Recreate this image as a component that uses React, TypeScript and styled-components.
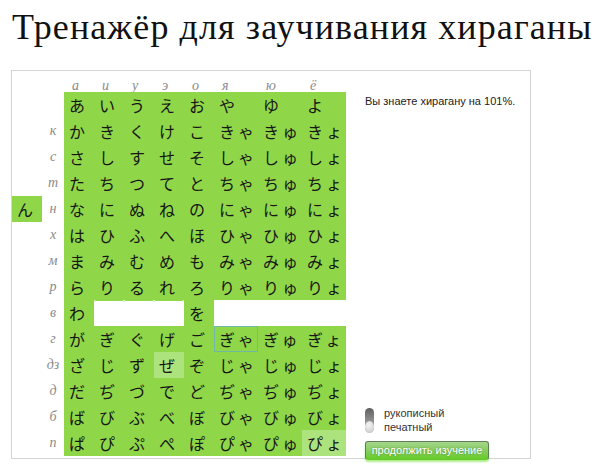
import React from "react";
import styled, { createGlobalStyle, css } from "styled-components";

const Global = createGlobalStyle`
  html, body { margin: 0; padding: 0; background: #fff; }
  body { width: 604px; height: 472px; overflow: hidden; }
`;

const Page = styled.div`
  width: 604px;
  height: 472px;
  overflow: hidden;
`;

const Title = styled.h1`
  margin: 7px 0 23px 12px;
  font-family: "Liberation Serif", "Times New Roman", serif;
  font-weight: normal;
  font-size: 36px;
  letter-spacing: 1.1px;
  line-height: 40px;
  color: #111;
  white-space: nowrap;
`;

const Box = styled.div`
  margin-left: 11px;
  width: 518px;
  height: 386px;
  border: 1px solid #d4d4d4;
  display: flex;
  padding-top: 1px;
`;

const Table = styled.div`
  display: grid;
  grid-template-columns: 30px 22px repeat(5, 30px) repeat(3, 44px);
  grid-template-rows: 20px repeat(14, 26px);
  flex: none;
`;

const Header = styled.div`
  font-family: "Liberation Serif", "Times New Roman", serif;
  font-style: italic;
  font-size: 14px;
  color: #8a8a8a;
  padding-left: 8px;
  display: flex;
  align-items: flex-end;
  margin-bottom: -2px;
`;

const RowLabel = styled.div`
  font-family: "Liberation Serif", "Times New Roman", serif;
  font-style: italic;
  font-size: 14px;
  color: #8a8a8a;
  display: flex;
  align-items: center;
  justify-content: center;
`;

const Empty = styled.div``;

type Variant = "normal" | "light" | "outlined" | "blank";

const Kana = styled.div<{ $variant?: Variant; $compound?: boolean }>`
  font-family: "Noto Sans CJK JP", "Noto Sans", sans-serif;
  font-size: 16px;
  color: #161616;
  background: #8fd748;
  display: flex;
  align-items: center;
  padding-left: 5px;
  letter-spacing: ${(p) => (p.$compound ? "3px" : "0")};
  white-space: nowrap;
  ${(p) =>
    p.$variant === "light" &&
    css`
      background: #ade37c;
    `}
  ${(p) =>
    p.$variant === "outlined" &&
    css`
      box-shadow: inset 0 0 0 1px #6fb9a4;
    `}
  ${(p) =>
    p.$variant === "blank" &&
    css`
      background: #fff;
      border-top: 1px solid #8fd748;
      border-radius: 2px;
    `}
`;

const NCell = styled(Kana)``;

const Side = styled.div`
  flex: 1;
  display: flex;
  flex-direction: column;
  justify-content: space-between;
  padding: 22px 0 0 19px;
  font-family: "Liberation Sans", Arial, sans-serif;
  font-size: 11px;
  color: #222;
`;

const Score = styled.div`
  line-height: 14px;
`;

const Bottom = styled.div`
  display: flex;
  flex-direction: column;
  gap: 7px;
  margin-bottom: -2px;
`;

const ToggleRow = styled.div`
  display: flex;
  align-items: center;
  gap: 10px;
`;

const Toggle = styled.div`
  position: relative;
  width: 9px;
  height: 25px;
  border-radius: 5px;
  background: linear-gradient(#5e5e5e, #8e8e8e 50%, #c8c8c8);
  &::after {
    content: "";
    position: absolute;
    left: 0;
    bottom: 0;
    width: 9px;
    height: 12px;
    border-radius: 50%;
    background: radial-gradient(circle at 40% 35%, #f4f4f4, #c4c4c4);
  }
`;

const Labels = styled.div`
  display: flex;
  flex-direction: column;
  line-height: 14px;
  color: #333;
`;

const Button = styled.div`
  width: 122px;
  height: 17px;
  border: 1px solid #5f7d56;
  border-bottom-color: #62c82c;
  border-radius: 3px;
  background: linear-gradient(#a4d68a, #86cc5e 55%, #66cc26);
  color: #fff;
  font-size: 11px;
  line-height: 17px;
  text-align: center;
  text-shadow: 0 0 2px rgba(60, 110, 30, 0.7);
  box-shadow: 0 2px 2px rgba(120, 220, 60, 0.6);
`;

const headers = ["а", "и", "у", "э", "о", "я", "ю", "ё"];
const labels = ["", "к", "с", "т", "н", "х", "м", "р", "в", "г", "дз", "д", "б", "п"];

type Cell = { t: string; v?: Variant } | null;

const rows: Cell[][] = [
  ["あ", "い", "う", "え", "お", "や", "ゆ", "よ"],
  ["か", "き", "く", "け", "こ", "きゃ", "きゅ", "きょ"],
  ["さ", "し", "す", "せ", "そ", "しゃ", "しゅ", "しょ"],
  ["た", "ち", "つ", "て", "と", "ちゃ", "ちゅ", "ちょ"],
  ["な", "に", "ぬ", "ね", "の", "にゃ", "にゅ", "にょ"],
  ["は", "ひ", "ふ", "へ", "ほ", "ひゃ", "ひゅ", "ひょ"],
  ["ま", "み", "む", "め", "も", "みゃ", "みゅ", "みょ"],
  ["ら", "り", "る", "れ", "ろ", "りゃ", "りゅ", "りょ"],
  ["わ", "#", "#", "#", "を", "", "", ""],
  ["が", "ぎ", "ぐ", "げ", "ご", "ぎゃ*", "ぎゅ", "ぎょ"],
  ["ざ", "じ", "ず", "ぜ+", "ぞ", "じゃ", "じゅ", "じょ"],
  ["だ", "ぢ", "づ", "で", "ど", "ぢゃ", "ぢゅ", "ぢょ"],
  ["ば", "び", "ぶ", "べ", "ぼ", "びゃ", "びゅ", "びょ"],
  ["ぱ", "ぴ", "ぷ", "ぺ", "ぽ", "ぴゃ", "ぴゅ", "ぴょ+"],
].map((r) =>
  r.map((s) => {
    if (s === "") return null;
    if (s === "#") return { t: "", v: "blank" as Variant };
    if (s.endsWith("*")) return { t: s.slice(0, -1), v: "outlined" as Variant };
    if (s.endsWith("+")) return { t: s.slice(0, -1), v: "light" as Variant };
    return { t: s, v: "normal" as Variant };
  })
);

export default function App() {
  return (
    <Page>
      <Global />
      <Title>Тренажёр для заучивания хираганы</Title>
      <Box>
        <Table>
          <Empty />
          <Empty />
          {headers.map((h) => (
            <Header key={h}>{h}</Header>
          ))}
          {rows.map((row, ri) => (
            <React.Fragment key={ri}>
              {ri === 4 ? <NCell>ん</NCell> : <Empty />}
              <RowLabel>{labels[ri]}</RowLabel>
              {row.map((c, ci) =>
                c ? (
                  <Kana key={ci} $variant={c.v} $compound={c.t.length > 1}>
                    {c.t}
                  </Kana>
                ) : (
                  <Empty key={ci} />
                )
              )}
            </React.Fragment>
          ))}
        </Table>
        <Side>
          <Score>Вы знаете хирагану на 101%.</Score>
          <Bottom>
            <ToggleRow>
              <Toggle />
              <Labels>
                <span>рукописный</span>
                <span>печатный</span>
              </Labels>
            </ToggleRow>
            <Button>продолжить изучение</Button>
          </Bottom>
        </Side>
      </Box>
    </Page>
  );
}
